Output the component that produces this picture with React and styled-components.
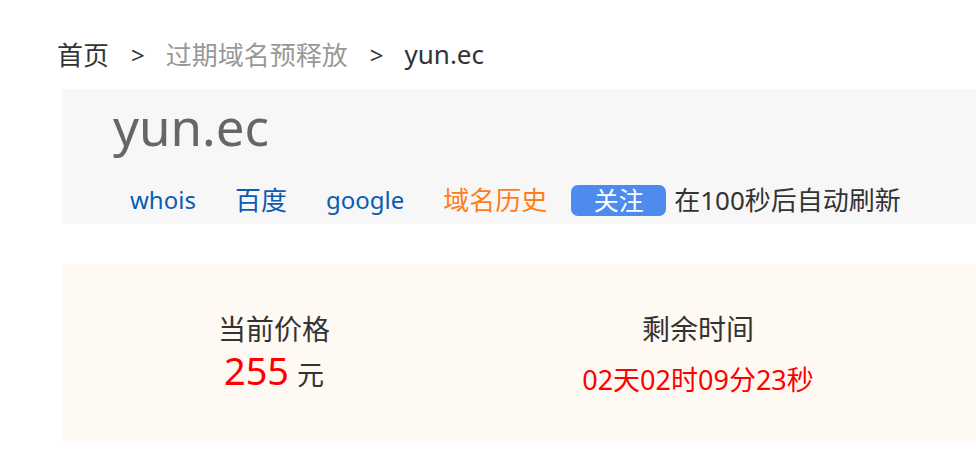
import styled, { createGlobalStyle } from "styled-components";

const GlobalStyle = createGlobalStyle`
  html, body {
    margin: 0;
    padding: 0;
    overflow: hidden;
    background: #fff;
    font-family: "Noto Sans", "Noto Sans CJK SC", sans-serif;
  }
`;

const Page = styled.div`
  width: 1300px;
  padding: 34px 0 0 62px;
`;

const Crumbs = styled.div`
  display: flex;
  align-items: center;
  margin-left: -5px;
  height: 40px;
  font-size: 26px;
  color: #333;
`;

const Crumb = styled.span`
  color: ${(p) => (p.$muted ? "#999" : "#333")};
`;

const Sep = styled.span`
  padding: 0 21px 0 22px;
  font-size: 24px;
`;

const InfoPanel = styled.div`
  margin-top: 15px;
  height: 135px;
  background: #f7f7f7;
  padding-left: 51px;
  box-sizing: border-box;
`;

const Title = styled.h1`
  margin: 0;
  padding-top: 4px;
  font-size: 51px;
  font-weight: 400;
  line-height: 66px;
  color: #666;
`;

const Links = styled.div`
  display: flex;
  align-items: center;
  margin-top: 24px;
  padding-left: 17px;
  font-size: 26px;
  line-height: 34px;
`;

const Link = styled.a`
  margin-right: ${(p) => (p.$orange ? "24px" : "39px")};
  font-size: ${(p) => (p.$latin ? "24px" : "26px")};
  color: ${(p) => (p.$orange ? "#ff7d1a" : "#0b5cb5")};
  text-decoration: none;
  cursor: pointer;
`;

const FollowBtn = styled.button`
  width: 95px;
  height: 31px;
  margin-right: 8px;
  border: none;
  border-radius: 7px;
  background: #4d8bef;
  color: #fff;
  font-family: inherit;
  font-size: 25px;
  line-height: 31px;
  padding: 0;
`;

const Refresh = styled.span`
  color: #333;
`;

const AuctionPanel = styled.div`
  display: flex;
  margin-top: 40px;
  height: 179px;
  background: #fef9f2;
`;

const Cell = styled.div`
  width: 424px;
  display: flex;
  flex-direction: column;
  align-items: center;
  padding-top: 47px;
  box-sizing: border-box;
`;

const Label = styled.div`
  font-size: 28px;
  line-height: 36px;
  color: #333;
`;

const Price = styled.div`
  font-size: 27px;
  line-height: 44px;
  color: #333;
  margin-top: 1px;
`;

const Amount = styled.span`
  font-size: 38px;
  color: #ff0000;
  margin-right: 8px;
`;

const Countdown = styled.div`
  margin-top: 17px;
  font-size: 27px;
  line-height: 32px;
  color: #ff0000;
`;

export default function App() {
  return (
    <>
      <GlobalStyle />
      <Page>
        <Crumbs>
          <Crumb>首页</Crumb>
          <Sep>&gt;</Sep>
          <Crumb $muted>过期域名预释放</Crumb>
          <Sep>&gt;</Sep>
          <Crumb>yun.ec</Crumb>
        </Crumbs>
        <InfoPanel>
          <Title>yun.ec</Title>
          <Links>
            <Link $latin>whois</Link>
            <Link>百度</Link>
            <Link $latin>google</Link>
            <Link $orange>域名历史</Link>
            <FollowBtn>关注</FollowBtn>
            <Refresh>在100秒后自动刷新</Refresh>
          </Links>
        </InfoPanel>
        <AuctionPanel>
          <Cell>
            <Label>当前价格</Label>
            <Price>
              <Amount>255</Amount>元
            </Price>
          </Cell>
          <Cell>
            <Label>剩余时间</Label>
            <Countdown>02天02时09分23秒</Countdown>
          </Cell>
        </AuctionPanel>
      </Page>
    </>
  );
}
